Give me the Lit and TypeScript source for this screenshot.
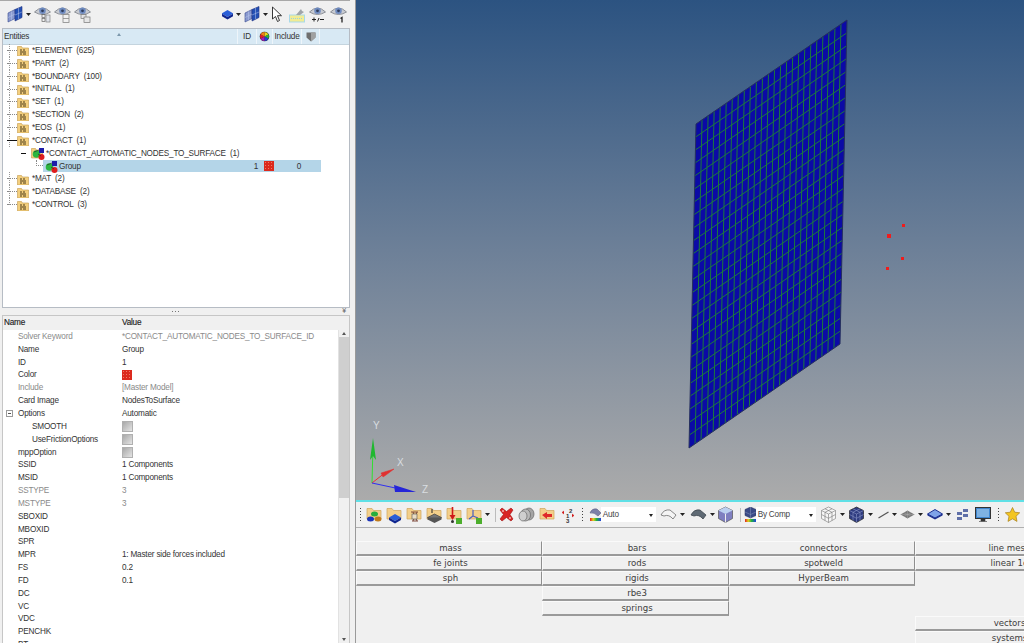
import { LitElement, html, css, svg } from "lit";
import { customElement } from "lit/decorators.js";

const ic = (w: number, h: number, body: unknown) =>
  html`<svg class="ic" width=${w} height=${h} viewBox="0 0 ${w} ${h}">${body}</svg>`;

const caret = () => html`<svg class="caret" width="5" height="3" viewBox="0 0 5 3"><path d="M0 0h5L2.5 3z" fill="#222"/></svg>`;

const folderBack = svg`<path d="M0.5 2.5h4l1 1.5h6v8h-11z" fill="#f3cf7e" stroke="#c49a4c" stroke-width=".6"/>`;

const meshIcon = () => ic(16, 17, svg`
  <path d="M1 7L8 3.500v9L1 16z" fill="#8b9ad0" stroke="#34478f" stroke-width=".6"/>
  <path d="M8 3.500L15 0.500v11L8 15z" fill="#2450b4" stroke="#1f2f80" stroke-width=".6"/>
  <path d="M4.500 5.300v9M11.500 2v11M1 11.500l7-3.500M8 9l7-3" stroke="#b9c8ec" stroke-width=".5" fill="none"/>`);

const eye = (extra: unknown) => ic(17, 17, svg`
  <path d="M0.500 6Q8.500 -2 16.500 6Q8.500 11 0.500 6z" fill="#c9ccd2" stroke="#7b7f86" stroke-width=".8"/>
  <circle cx="8.500" cy="4.800" r="3.300" fill="#6f8bc0"/><circle cx="8.500" cy="4.800" r="1.400" fill="#2f3d5c"/>
  ${extra}`);

const eyeA = svg`<rect x="8" y="8.500" width="3" height="3" fill="none" stroke="#666" stroke-width=".7"/><rect x="8" y="12.500" width="3" height="3" fill="none" stroke="#666" stroke-width=".7"/><rect x="12" y="9" width="4" height="7" fill="#dfe3ea" stroke="#777" stroke-width=".6"/>`;
const eyeB = svg`<rect x="9" y="8.500" width="6" height="8" fill="none" stroke="#888" stroke-width=".8"/><path d="M9 12.500h6" stroke="#888" stroke-width=".8"/>`;
const eyeC = svg`<rect x="7" y="8.500" width="5" height="4" fill="#e6e6e6" stroke="#777" stroke-width=".7"/><rect x="10" y="11" width="6" height="5.500" fill="#e6e6e6" stroke="#777" stroke-width=".7"/>`;
const eyeD = svg`<path d="M3 13.500h4M5 11.500v4M8.500 15.500l1.500-3.500M11 13.500h4" stroke="#222" stroke-width="1" fill="none"/>`;
const eyeE = svg`<path d="M10.500 12.500l1.500-1v5" stroke="#222" stroke-width="1.300" fill="none"/>`;

const blueBox = (x = 0, y = 0) => svg`<g transform="translate(${x} ${y})"><path d="M6 1l6 3.500-6 3.500-6-3.500z" fill="#2a5fd8"/><path d="M0 4.500l6 3.500 6-3.500v2.500l-6 3.500-6-3.500z" fill="#10268f"/></g>`;

const cubeTb = () => ic(11, 11, blueBox(-0.5, 0));
const cursor = () => ic(11, 17, svg`<path d="M1.500 1v12l3-2.500 2 5 2-1-2-4.800h4z" fill="#fff" stroke="#222" stroke-width=".9"/>`);
const hilite = () => ic(16, 17, svg`<rect x="0.500" y="9" width="15" height="7" fill="#f2ec93" stroke="#a8d9e8"/><path d="M2 12.500h12" stroke="#9bd3de" stroke-dasharray="1 1"/><path d="M7 9l5-6 1 2 2 1-4 3z" fill="#9fa4a8"/>`);

const folderIcon = () => ic(12, 12, svg`${folderBack}
  <path d="M3 6h2M6 6h2M3 8h6M3 10h2M6 10h3" stroke="#4c3a18" stroke-width="1"/>`);

const contactDots = svg`
  <circle cx="5.500" cy="8" r="3.800" fill="#2bb640"/>
  <rect x="8" y="2" width="5" height="5" fill="#1c1ca8"/>
  <circle cx="10.500" cy="11" r="3" fill="#df1c1c"/>
  <path d="M3 6l5-2M7 8l3 2" stroke="#222" stroke-width=".6"/>`;

const groupIcon = () => ic(14, 14, contactDots);
const folderContact = () => ic(14, 14, svg`${folderBack}${contactDots}`);
const swatch = () => html`<span class="swatch"></span>`;

const colorWheel = () => ic(11, 11, svg`
  <circle cx="5.500" cy="5.500" r="4.800" fill="#222"/>
  <path d="M5.500 5.500V1a4.500 4.500 0 0 1 4 2.500z" fill="#e8d81c"/>
  <path d="M5.500 5.500l4-2.200a4.500 4.500 0 0 1 0 4.400z" fill="#28b040"/>
  <path d="M5.500 5.500l4 2.200A4.500 4.500 0 0 1 5.500 10z" fill="#2040d8"/>
  <path d="M5.500 5.500V10a4.500 4.500 0 0 1-4-2.300z" fill="#a020b8"/>
  <path d="M5.500 5.500l-4 2.200a4.500 4.500 0 0 1 0-4.400z" fill="#e01c2c"/>
  <path d="M5.500 5.500l-4-2.200A4.500 4.500 0 0 1 5.500 1z" fill="#f08018"/>`);
const incIcon = () => ic(10, 11, svg`<path d="M0.500 1.500h9v5L5 10.500 0.500 6.500z" fill="#6f6f6f"/><path d="M5 1.500h4.500v5L5 10.500z" fill="#a0a0a0"/>`);

const tbFolder = (body: unknown) => ic(16, 18, svg`
  <path d="M1 2.500h5l1.500 2H15V13H1z" fill="#f3cf8a" stroke="#cfa45a" stroke-width=".7"/>${body}`);

const tb = {
  a: () => tbFolder(svg`<ellipse cx="8.500" cy="8" rx="3.500" ry="2.500" fill="#27ae3c"/><ellipse cx="4.500" cy="13" rx="3.500" ry="2.500" fill="#1c35b8"/><ellipse cx="12" cy="13" rx="3.500" ry="2.500" fill="#c07a1c"/>`),
  b: () => tbFolder(svg`${blueBox(3, 7)}`),
  c: () => tbFolder(svg`<path d="M5 6h7M6 15h6M7 6l4 9M11 6l-4 9" stroke="#7f4a3c" stroke-width="1" fill="none"/><rect x="6" y="8" width="5" height="5" fill="#e9dcc4" stroke="#555" stroke-width=".6"/>`),
  d: () => tbFolder(svg`<path d="M8.500 8l7 3.500-7 3.500-7-3.500z" fill="#777" stroke="#333" stroke-width=".6"/><path d="M1.500 11.500v2l7 3.500 7-3.500v-2" fill="#555"/><path d="M6 3v4" stroke="#222"/>`),
  e: () => tbFolder(svg`<path d="M6.500 1v10" stroke="#d01818" stroke-width="1.600"/><path d="M3.500 9l3 5 3-5z" fill="#d01818"/><circle cx="6.500" cy="15.500" r="1.500" fill="#333"/><rect x="10" y="12" width="6" height="6" fill="#4cae2c"/>`),
  f: () => tbFolder(svg`<path d="M7 4v6l-4 3M7 10l5 2" stroke="#4a5fc0" stroke-width="1.200" fill="none"/><rect x="10" y="12" width="6" height="6" fill="#4cae2c"/>`),
  x: () => ic(15, 15, svg`<path d="M1 3l2-2 4.500 3.500L12 1l2 2-3 4.500 3 4.500-2 2-4.500-3.500L3 14l-2-2 3.500-4.500z" fill="#d82424" stroke="#a01010" stroke-width=".6"/><circle cx="4" cy="4" r="1" fill="#f7b0b0"/><circle cx="11" cy="11" r="1" fill="#f7b0b0"/>`),
  cyl: () => ic(17, 15, svg`<ellipse cx="11" cy="7" rx="5" ry="6" fill="#a5a5a5" stroke="#666" stroke-width=".7"/><ellipse cx="7.500" cy="8" rx="5" ry="6" fill="#b9b9b9" stroke="#666" stroke-width=".7"/><ellipse cx="5" cy="9" rx="4" ry="5" fill="#cfcfcf" stroke="#666" stroke-width=".7"/>`),
  back: () => tbFolder(svg`<path d="M3 9l5-3v2h5v3H8v2z" fill="#df2a2a"/>`),
  num: () => ic(14, 16, svg`
    <text class="nm" x="8" y="6">2</text><text class="nm" x="5" y="11">1</text><text class="nm" x="5" y="16">3</text>
    <path d="M3 4L1 5.500 3 7M11 7l2 1.500-2 1.500" fill="#d01818" stroke="#d01818" stroke-width=".6"/>`),
  comboA: () => ic(13, 15, svg`<path d="M1 6Q3 1 8 2L12 6 9 9Q5 5 1 6z" fill="#7b7fa8" stroke="#4f5277" stroke-width=".5"/><rect x="1" y="11" width="11" height="3" fill="url(#rb)"/>
    <defs><linearGradient id="rb"><stop offset="0" stop-color="#e02020"/><stop offset=".3" stop-color="#e0d020"/><stop offset=".6" stop-color="#20b040"/><stop offset="1" stop-color="#2040e0"/></linearGradient></defs>`),
  shape: () => ic(17, 14, svg`<path d="M1 7Q4 1 10 2l6 5-3 4Q9 6 4 8z" fill="#f4f4f4" stroke="#6b6b6b" stroke-width=".8"/>`),
  shape2: () => ic(17, 14, svg`<path d="M1 7Q4 1 10 2l6 5-3 4Q9 6 4 8z" fill="#5f6a74" stroke="#3e464e" stroke-width=".8"/>`),
  cube: () => ic(17, 17, svg`<path d="M8.500 1l7 3.500v8l-7 4-7-4v-8z" fill="#7f7fc0" stroke="#555" stroke-width=".7"/><path d="M1.500 4.500l7 3.500 7-3.500-7-3.500z" fill="#bcd0f0"/><path d="M8.500 8v8.500" stroke="#eee"/>`),
  comboB: () => ic(13, 15, svg`<path d="M6.500 0l5.500 2.500v6L6.500 11 1 8.500v-6z" fill="#3a4a86" stroke="#1f2a58" stroke-width=".5"/><path d="M1 5l5.500 2.500L12 5M6.500 0v11" stroke="#a0abd0" stroke-width=".4" fill="none"/><rect x="1" y="12" width="11" height="3" fill="url(#rb)"/>`),
  wire: () => ic(17, 17, svg`<g fill="#f6f6f6" stroke="#777" stroke-width=".6"><path d="M8.500 1l7 3.500v8l-7 4-7-4v-8z"/><path d="M1.500 4.500l7 3.500 7-3.500M8.500 8v8.500M5 2.800l7 3.500M12 2.800L5 6.300M1.500 8.500l7 3.800 7-3.800M5 6.300v8.200M12 6.300v8.200"/></g>`),
  solid: () => ic(17, 17, svg`<path d="M8.500 1l7 3.500v8l-7 4-7-4v-8z" fill="#2f3c80" stroke="#222" stroke-width=".7"/><g fill="none" stroke="#8a96c8" stroke-width=".6"><path d="M1.500 4.500l7 3.500 7-3.500M8.500 8v8.500M5 2.800l7 3.500M12 2.800L5 6.300M1.500 8.500l7 3.800 7-3.800M5 6.300v8.200M12 6.300v8.200"/></g>`),
  line: () => ic(11, 8, svg`<path d="M0.500 7L10.500 1" stroke="#555" stroke-width="1.200"/>`),
  diamond: () => ic(15, 9, svg`<path d="M7.500 0.500l7 4-7 4-7-4z" fill="#777"/><path d="M4 2.500l7 4M11 2.500l-7 4M7.500.5v8M.5 4.500h14" stroke="#aaa" stroke-width=".5"/>`),
  diamondB: () => ic(16, 11, svg`<path d="M8 0.500l7.500 4.500L8 9 0.500 5z" fill="#7fa3e8" stroke="#1c2f90"/><path d="M0.500 5v1.500L8 10.500l7.500-4V5L8 9z" fill="#1c2f90"/>`),
  blocks: () => ic(12, 13, svg`<g fill="#5f6fa8"><rect x="6" y="1" width="5" height="3"/><rect x="0" y="4" width="5" height="3"/><rect x="6" y="6" width="5" height="3"/><rect x="0" y="9" width="5" height="3"/></g>`),
  screen: () => ic(16, 16, svg`<rect x="0.500" y="0.500" width="15" height="11" fill="#3f86cf" stroke="#333"/><rect x="2" y="2" width="12" height="8" fill="#7fb2e2"/><path d="M6 12h4v2H6zM4 14.500h8" fill="#333" stroke="#333" stroke-width=".6"/>`),
  star: () => ic(15, 15, svg`<path d="M7.500 0.500l2.200 4.700 5 .6-3.700 3.500 1 5.100-4.500-2.600-4.500 2.600 1-5.100L.3 5.800l5-.6z" fill="#f3c521" stroke="#a8801a" stroke-width=".7"/>`),
};

const tree: [string, number][] = [
  ["*ELEMENT  (625)", 0], ["*PART  (2)", 0], ["*BOUNDARY  (100)", 0], ["*INITIAL  (1)", 0],
  ["*SET  (1)", 0], ["*SECTION  (2)", 0], ["*EOS  (1)", 0], ["*CONTACT  (1)", 2],
  ["*CONTACT_AUTOMATIC_NODES_TO_SURFACE  (1)", 1], ["Group", 3],
  ["*MAT  (2)", 0], ["*DATABASE  (2)", 0], ["*CONTROL  (3)", 0],
];

type Prop = { n: string; v?: string; dim?: boolean; kind?: string };
const props: Prop[] = [
  { n: "Solver Keyword", v: "*CONTACT_AUTOMATIC_NODES_TO_SURFACE_ID", dim: true },
  { n: "Name", v: "Group" }, { n: "ID", v: "1" }, { n: "Color", kind: "color" },
  { n: "Include", v: "[Master Model]", dim: true }, { n: "Card Image", v: "NodesToSurface" },
  { n: "Options", v: "Automatic", kind: "group" }, { n: "SMOOTH", kind: "sub" },
  { n: "UseFrictionOptions", kind: "sub" }, { n: "mppOption", kind: "check" },
  { n: "SSID", v: "1 Components" }, { n: "MSID", v: "1 Components" },
  { n: "SSTYPE", v: "3", dim: true }, { n: "MSTYPE", v: "3", dim: true },
  { n: "SBOXID" }, { n: "MBOXID" }, { n: "SPR" },
  { n: "MPR", v: "1: Master side forces included" }, { n: "FS", v: "0.2" }, { n: "FD", v: "0.1" },
  { n: "DC" }, { n: "VC" }, { n: "VDC" }, { n: "PENCHK" }, { n: "BT" },
];

const columns = [
  ["mass", "fe joints", "sph"],
  ["bars", "rods", "rigids", "rbe3", "springs"],
  ["connectors", "spotweld", "HyperBeam"],
  ["line mesh", "linear 1d", "", "", "", "vectors", "systems"],
];

const GRID = 25;
const P00 = [340, 124], P10 = [491, 20], P01 = [333, 448], P11 = [484, 344];
const mix = (a: number[], b: number[], t: number) => [a[0] + (b[0] - a[0]) * t, a[1] + (b[1] - a[1]) * t];
const gridPath = () => {
  let d = "";
  for (let i = 1; i < GRID; i++) {
    const t = i / GRID;
    const a = mix(P00, P10, t), b = mix(P01, P11, t), c = mix(P00, P01, t), e = mix(P10, P11, t);
    d += `M${a[0]} ${a[1]}L${b[0]} ${b[1]}M${c[0]} ${c[1]}L${e[0]} ${e[1]}`;
  }
  return d;
};

@customElement("app-root")
export class AppRoot extends LitElement {
  static styles = css`
    :host { display: flex; width: 1024px; height: 643px; overflow: hidden; background: #f0f0f0; font-family: "Liberation Sans", Arial, sans-serif; font-size: 8.2px; letter-spacing: -0.2px; color: #333; }
    svg.ic { display: block; flex: none; }
    svg.caret { display: block; flex: none; }
    .nm { font: 700 6px "Liberation Sans", sans-serif; fill: #333; }
    .left { width: 350px; flex: none; display: flex; flex-direction: column; height: 643px; overflow: hidden; border-top: 1px solid #a8a8a8; box-sizing: border-box; }
    .topbar { height: 27px; flex: none; display: flex; align-items: center; padding: 0 3px 0 7px; box-sizing: border-box; }
    .topbar .caret { margin: 0 3px 0 3px; }
    .topbar .eye { margin-right: 3px; }
    .spacer { flex: 1; }
    .cube-gap { margin-right: 4px; }
    .tight { margin-right: 7px; }
    .tree { height: 280px; flex: none; margin: 0 0 0 2px; border: 1px solid #b6bcc4; background: #fff; box-sizing: border-box; overflow: hidden; }
    .thead { height: 15px; display: grid; grid-template-columns: 235px 19px 16px 29px 18px 1fr; background: #d8e9f4; border-bottom: 1px solid #c4d4de; line-height: 14px; }
    .thead > div { border-right: 1px solid #eef5fa; display: flex; align-items: center; justify-content: center; }
    .thead > .ent { justify-content: flex-start; padding-left: 1px; position: relative; }
    .sort { position: absolute; left: 114px; top: 2px; width: 0; height: 0; border: 2px solid transparent; border-bottom: 3px solid #7b97ac; }
    .thead > .last { border-right: 0; }
    .rows { margin-top: -1px; }
    .row { height: 12.85px; display: flex; align-items: center; white-space: pre; position: relative; }
    .gut { width: 14px; flex: none; height: 100%; position: relative; }
    .gut::before { content: ""; position: absolute; left: 6px; top: 0; bottom: 0; border-left: 1px dotted #999; }
    .gut::after { content: ""; position: absolute; left: 4px; right: 0; top: 6px; border-top: 1px dotted #888; }
    .gut.open::after { border-top: 1px solid #111; }
    .last-gut::before { bottom: 6px; }
    .row .ic { margin-right: 3px; }
    .ind1 { padding-left: 14px; }
    .ind1 .ic { margin-right: 1px; }
    .gut1 { width: 14px; flex: none; height: 100%; position: relative; }
    .gut1::after { content: ""; position: absolute; left: 4px; width: 5px; top: 6px; border-top: 1px solid #111; }
    .gut2 { width: 40px; flex: none; height: 100%; position: relative; }
    .gut2::after { content: ""; position: absolute; left: 33px; width: 7px; top: 0; height: 6px; border-left: 1px dotted #888; border-bottom: 1px dotted #888; box-sizing: border-box; }
    .sel { flex: 1; height: 100%; margin-right: 28px; background: #b4d5e8; display: flex; align-items: center; color: #333; }
    .sel .ic { margin-right: 1px; margin-left: 1px; }
    .cols { margin-left: auto; display: flex; align-items: center; }
    .c1 { width: 14px; text-align: center; }
    .c2 { width: 10px; margin: 0 18px 0 1px; }
    .c3 { width: 14px; margin-right: 15px; text-align: center; }
    .swatch { display: block; width: 10px; height: 10px; background: #dc2a1e radial-gradient(circle, #ee7a68 0 .6px, transparent 1px) 0 0 / 3px 3px; }
    .split { height: 7px; flex: none; display: flex; align-items: center; justify-content: center; position: relative; gap: 2px; }
    .split i { width: 1px; height: 1px; background: #777; }
    .chev { position: absolute; right: 4px; top: 0; font-size: 7px; line-height: 6px; color: #666; }
    .props { flex: 1; margin-left: 2px; border: 1px solid #c6c6c6; border-bottom: 0; background: #fff; min-height: 0; display: flex; flex-direction: column; overflow: hidden; box-sizing: border-box; }
    .phead { height: 14px; flex: none; display: grid; grid-template-columns: 118px 1fr; background: #f0f0f0; line-height: 14px; color: #222; padding-left: 1px; -webkit-text-stroke: .15px #222; }
    .pbody { flex: 1; display: flex; min-height: 0; }
    .plist { flex: 1; min-width: 0; overflow: hidden; }
    .prow { height: 12.85px; display: grid; grid-template-columns: 119px 1fr; align-items: center; white-space: nowrap; }
    .prow.dim { color: #8a8a8a; }
    .pn { padding-left: 15px; display: flex; align-items: center; position: relative; }
    .pn.sub { padding-left: 29px; }
    .exp { position: absolute; left: 3px; top: 1px; width: 5px; height: 5px; border: 1px solid #9a9a9a; box-sizing: content-box; background: linear-gradient(#555, #555) center / 3px 1px no-repeat; }
    .cb { display: block; width: 9px; height: 9px; border: 1px solid #b0b0b0; background: linear-gradient(135deg, #a8a8a8, #e4e4e4); }
    .sb { width: 10px; flex: none; background: #f0f0f0; border-left: 1px solid #e2e2e2; display: flex; flex-direction: column; align-items: center; position: relative; }
    .sb-up { width: 0; height: 0; border: 2.500px solid transparent; border-bottom: 3px solid #555; }
    .sb-th { width: 100%; height: 161px; background: #cfcfcf; margin-top: 2px; }
    .sb-dn { position: absolute; bottom: 0; width: 0; height: 0; border: 2.500px solid transparent; border-top: 3px solid #555; }
    .sash { width: 6px; flex: none; background: #f0f0f0; border-right: 1px solid #9a9a9a; box-sizing: border-box; }
    .right { flex: 1; min-width: 0; display: flex; flex-direction: column; overflow: hidden; }
    .view { display: block; height: 500px; flex: none; }
    .view text { font: 10px "Liberation Sans", sans-serif; fill: #d9dde0; }
    .cyan { height: 2px; flex: none; background: #5fe0e6; }
    .tools { height: 26px; flex: none; display: flex; align-items: center; padding-left: 3px; border-bottom: 1px solid #b0b0b0; box-sizing: border-box; overflow: hidden; }
    .tools > * { margin-right: 4px; }
    .tools .caret { margin: 0 3px 0 -1px; }
    .tools .caret.wide { margin-right: 5px; }
    .tools .caret.slim { margin-right: 2px; }
    .grip { width: 1px; height: 16px; background: radial-gradient(circle, #444 .6px, transparent .8px) 0 0 / 1px 3px; margin: 0 5px 0 1px !important; }
    .grip.roomy { margin: 0 6px 0 3px !important; }
    .sep { width: 1px; height: 14px; background: #bcbcbc; margin: 0 3px 0 2px !important; }
    .ml1 { margin-left: 1px; }
    .ml2 { margin-left: 2px; }
    .ml3 { margin-left: 3px; }
    .combo { width: 60px; height: 15px; background: #fff; display: flex; align-items: center; justify-content: space-between; padding: 0 3px 0 2px; box-sizing: border-box; font-size: 8.2px; color: #444; margin-left: -5px; }
    .combo.bc { width: 66px; }
    .combo i { width: 0; height: 0; border: 2.500px solid transparent; border-top: 3px solid #222; margin-top: 3px; }
    .panel { flex: 1; display: grid; grid-template-columns: 186px 187px 186px 186px; padding-top: 13px; align-items: start; }
    .col { display: flex; flex-direction: column; }
    .btn { height: 15px; box-sizing: border-box; background: #f0f0f0; border-top: 1px solid #fafafa; border-left: 1px solid #fafafa; border-right: 1px solid #8f8f8f; border-bottom: 2px solid #9a9a9a; padding-left: 3px; text-align: center; font: 8.6px/13px "DejaVu Sans", sans-serif; letter-spacing: 0; color: #3c3c3c; white-space: nowrap; }
    .btn.blank { background: none; border-color: transparent; }
  `;

  private treeRow(label: string, kind: number, idx: number) {
    if (kind === 1)
      return html`<div class="row ind1"><span class="gut1"></span>${folderContact()}<span>${label}</span></div>`;
    if (kind === 3)
      return html`<div class="row"><span class="gut2"></span><div class="sel">${groupIcon()}<span>${label}</span>
        <span class="cols"><span class="c1">1</span><span class="c2">${swatch()}</span><span class="c3">0</span></span></div></div>`;
    const open = kind === 2 ? "open" : "";
    const last = idx === tree.length - 1 ? "last-gut" : "";
    return html`<div class="row"><span class="gut ${open} ${last}"></span>${folderIcon()}<span>${label}</span></div>`;
  }

  private propRow(p: Prop) {
    const k = p.kind;
    let val: unknown = p.v ?? "";
    if (k === "color") val = swatch();
    if (k === "sub" || k === "check") val = html`<span class="cb"></span>`;
    return html`<div class="prow ${p.dim ? "dim" : ""}">
      <span class="pn ${k === "sub" ? "sub" : ""}">${k === "group" ? html`<span class="exp"></span>` : ""}${p.n}</span>
      <span>${val}</span></div>`;
  }

  render() {
    return html`
      <div class="left">
        <div class="topbar">
          ${meshIcon()}${caret()}
          <span class="eye">${eye(eyeA)}</span><span class="eye">${eye(eyeB)}</span><span class="eye">${eye(eyeC)}</span>
          <span class="spacer"></span>
          ${cubeTb()}${caret()}${meshIcon()}${caret()}
          <span class="tight">${cursor()}</span><span class="cube-gap">${hilite()}</span>
          <span class="cube-gap">${eye(eyeD)}</span>${eye(eyeE)}
        </div>
        <div class="tree">
          <div class="thead">
            <div class="ent">Entities<span class="sort"></span></div>
            <div>ID</div><div>${colorWheel()}</div><div>Include</div><div>${incIcon()}</div><div class="last"></div>
          </div>
          <div class="rows">${tree.map(([l, k], i) => this.treeRow(l, k, i))}</div>
        </div>
        <div class="split"><i></i><i></i><i></i><span class="chev">¥</span></div>
        <div class="props">
          <div class="phead"><span>Name</span><span>Value</span></div>
          <div class="pbody">
            <div class="plist">${props.map((p) => this.propRow(p))}</div>
            <div class="sb"><span class="sb-up"></span><span class="sb-th"></span><span class="sb-dn"></span></div>
          </div>
        </div>
      </div>
      <div class="sash"></div>
      <div class="right">
        <svg class="view" width="668" height="500" viewBox="0 0 668 500">
          <defs><linearGradient id="bg" x1="0" y1="0" x2="0" y2="1">
            <stop offset="0" stop-color="#2c5381"/><stop offset=".5" stop-color="#6d8098"/><stop offset="1" stop-color="#ababab"/>
          </linearGradient></defs>
          <rect width="668" height="500" fill="url(#bg)"/>
          <path d="M340 124L491 20L484 344L333 448z" fill="#0b0aa6"/>
          <path d=${gridPath()} stroke="#1c7a3c" stroke-width="1" fill="none"/>
          <path d="M340 124L491 20L484 344L333 448z" fill="none" stroke="#26305e" stroke-width="1"/>
          <g fill="#f01c1c"><rect x="546" y="224" width="3" height="3"/><rect x="531" y="234" width="4" height="4"/><rect x="545" y="257" width="3" height="3"/><rect x="530" y="267" width="3" height="3"/></g>
          <path d="M16 483L17 445" stroke="#30e030" stroke-width="1"/><path d="M17 438l-3 22 3-4 3 4z" fill="#1fb82f"/>
          <path d="M16 483L30 472" stroke="#f03030" stroke-width="1"/><path d="M38 469l-13 4 2 4 3-2z" fill="#e03030" stroke="#e03030" stroke-width=".5"/>
          <path d="M16 483L44 489" stroke="#3030f0" stroke-width="1"/><path d="M60 492l-22-7 1 7z" fill="#2525d8"/>
          <text x="17" y="429">Y</text><text x="41" y="466">X</text><text x="66" y="493">Z</text>
        </svg>
        <div class="cyan"></div>
        <div class="tools">
          <span class="grip"></span>
          ${tb.a()}${tb.b()}${tb.c()}${tb.d()}${tb.e()}${tb.f()}${caret()}<span class="sep"></span>
          ${tb.x()}${tb.cyl()}${tb.back()}<span class="ml2">${tb.num()}</span><span class="grip roomy"></span>
          ${tb.comboA()}<span class="combo">Auto<i></i></span>
          ${tb.shape()}<svg class="caret wide" width="5" height="3" viewBox="0 0 5 3"><path d="M0 0h5L2.5 3z" fill="#222"/></svg>${tb.shape2()}<svg class="caret slim" width="5" height="3" viewBox="0 0 5 3"><path d="M0 0h5L2.5 3z" fill="#222"/></svg>${tb.cube()}<span class="sep"></span>
          ${tb.comboB()}<span class="combo bc">By Comp<i></i></span>
          ${tb.wire()}${caret()}${tb.solid()}${caret()}<span class="ml2">${tb.line()}</span>${caret()}${tb.diamond()}${caret()}<span class="ml1">${tb.diamondB()}</span>${caret()}
          <span class="ml3">${tb.blocks()}</span><span class="ml2">${tb.screen()}</span><span class="grip roomy"></span>${tb.star()}
        </div>
        <div class="panel">
          ${columns.map((c) => html`<div class="col">${c.map((t) => html`<div class="btn ${t ? "" : "blank"}">${t}</div>`)}</div>`)}
        </div>
      </div>`;
  }
}
